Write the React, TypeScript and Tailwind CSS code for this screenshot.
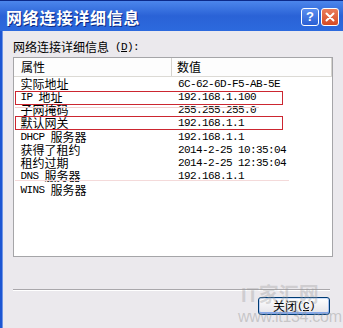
import React from "react";

const rows: [string, string][] = [
  ["实际地址", "6C-62-6D-F5-AB-5E"],
  ["IP 地址", "192.168.1.100"],
  ["子网掩码", "255.255.255.0"],
  ["默认网关", "192.168.1.1"],
  ["DHCP 服务器", "192.168.1.1"],
  ["获得了租约", "2014-2-25 10:35:04"],
  ["租约过期", "2014-2-25 12:35:04"],
  ["DNS 服务器", "192.168.1.1"],
  ["WINS 服务器", ""],
];

function Mixed({ text, u }: { text: string; u?: string }) {
  const parts = text.split(/([\x20-\x7E]+)/).filter((p) => p.length > 0);
  return (
    <span className="inline-flex items-center leading-none">
      {parts.map((p, i) =>
        /^[\x20-\x7E]+$/.test(p) ? (
          <span
            key={i}
            className="block font-['Liberation_Mono',monospace] text-[11px] leading-none tracking-[-0.6px] whitespace-pre mt-[1px]"
          >
            {u && p.includes(u) ? (
              <>
                {p.split(u)[0]}
                <span className="underline">{u}</span>
                {p.split(u)[1]}
              </>
            ) : (
              p
            )}
          </span>
        ) : (
          <span key={i} className="block text-[12px] leading-none whitespace-pre">
            {p}
          </span>
        )
      )}
    </span>
  );
}

export default function App() {
  return (
    <div className="relative w-[343px] h-[328px] overflow-hidden bg-[#ebe9ed] flex flex-col font-['Noto_Sans_CJK_SC',sans-serif] text-black">
      {/* Title bar */}
      <div className="h-[31px] shrink-0 flex items-center justify-between border-t border-[#0c2a8a] bg-gradient-to-b from-[#4c86ec] via-[#2a62d6] to-[#2c6ade] pl-[6px] pr-[4px]">
        <div className="text-white font-bold text-[16px] tracking-[0.8px] leading-none [text-shadow:1px_1px_0_#0d2a85] mt-[1px]">
          网络连接详细信息
        </div>
        <div className="flex items-center gap-[2px] mt-[1px]">
          <div className="w-[18px] h-[18px] rounded-[3px] border border-white bg-gradient-to-b from-[#5b8ff0] to-[#2a5fd4] flex items-center justify-center">
            <span className="text-white font-bold text-[13px] leading-none font-['Liberation_Sans',sans-serif]">?</span>
          </div>
          <div className="w-[18px] h-[18px] rounded-[3px] border border-white bg-gradient-to-b from-[#ea7c5a] to-[#d54a23] flex items-center justify-center">
            <svg width="10" height="10" viewBox="0 0 10 10">
              <path d="M1.5 1.5 L8.5 8.5 M8.5 1.5 L1.5 8.5" stroke="white" strokeWidth="2" strokeLinecap="round" />
            </svg>
          </div>
        </div>
      </div>

      {/* Body */}
      <div className="flex flex-1">
        <div className="w-[3px] shrink-0 bg-[#1d56d2] border-r border-[#6f95e6]" />
        <div className="flex-1 flex flex-col pl-[10px] pr-[10px] pt-[9px]">
          <div className="h-[14px] flex items-center">
            <Mixed text="网络连接详细信息 (D):" u="D" />
          </div>

          {/* List view */}
          <div className="mt-[3px] w-[320px] h-[200px] border border-[#a5a5a8] bg-white flex flex-col text-[12px]">
            <div className="h-[19px] shrink-0 flex border-b border-[#dcdad5] bg-[#fdfdfd]">
              <div className="w-[158px] border-r border-[#d5d3ce] pl-[7px] flex items-center leading-none">属性</div>
              <div className="flex-1 border-r border-[#d5d3ce] pl-[5px] flex items-center leading-none">数值</div>
            </div>
            <div className="flex flex-col">
              {rows.map(([k, v], i) => (
                <div key={i} className="relative h-[13.25px] flex items-center leading-none">
                  <div className="w-[158px] pl-[6.5px] flex items-center">
                    <Mixed text={k} />
                  </div>
                  <div className="pl-[6px] flex items-center">
                    <Mixed text={v} />
                  </div>
                  {i === 1 && (
                    <div className="absolute left-[1px] top-[0.75px] w-[268px] h-[14px] border-[1.5px] border-[#cc2630]" />
                  )}
                  {i === 3 && (
                    <div className="absolute left-[1px] top-[-0.75px] w-[268px] h-[14px] border-[1.5px] border-[#cc2630]" />
                  )}
                  {i === 2 && (
                    <div className="absolute left-[1px] top-[3px] w-[244px] h-[1px] bg-[#f1cfcf]" />
                  )}
                  {i === 7 && (
                    <div className="absolute left-[1px] top-[10px] w-[274px] h-[1px] bg-[#f4dada]" />
                  )}
                </div>
              ))}
            </div>
          </div>

          {/* Separator */}
          <div className="mt-[32px] mr-[3px] h-[2px] border-t border-[#a9a7ab] border-b border-b-white" />

          {/* Button */}
          <div className="mt-[6px] mr-[3px] self-end w-[72px] h-[18px] rounded-[3px] border border-[#003c74] bg-gradient-to-b from-white to-[#e4e3e8] shadow-[inset_0_-2px_0_#86a8e8,inset_0_1px_0_#cfe0fc,inset_1px_0_0_#bcd0f4,inset_-1px_0_0_#a8c2f0] flex items-center justify-center">
            <Mixed text="关闭(C)" u="C" />
          </div>
        </div>
      </div>

      {/* Watermark */}
      <div className="absolute left-[241px] top-[284px] text-[20px] leading-none font-bold text-[#9a9a9a]/35 whitespace-pre pointer-events-none">
        <span className="font-['Liberation_Sans',sans-serif]">IT</span>家汇网
      </div>
      <div className="absolute left-[238px] top-[309px] text-[16px] leading-none text-[#9a9a9a]/45 font-['Liberation_Sans',sans-serif] tracking-[-0.3px] pointer-events-none">
        www.it134.com
      </div>
    </div>
  );
}
